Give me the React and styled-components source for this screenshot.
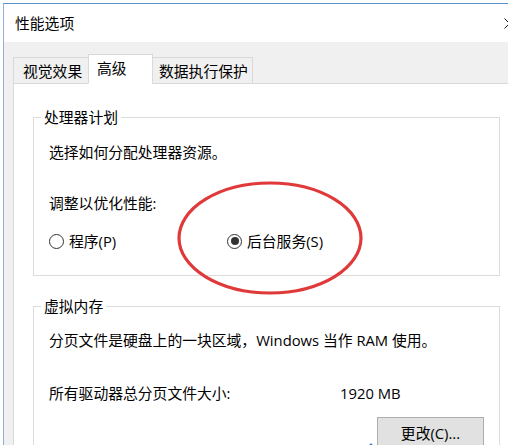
import React from "react";
import styled, { createGlobalStyle } from "styled-components";

const GlobalStyle = createGlobalStyle`
  html, body {
    margin: 0;
    padding: 0;
    background: #ffffff;
    width: 508px;
    height: 445px;
    overflow: hidden;
  }
  body {
    font-family: "Open Sans", "Noto Sans CJK SC", sans-serif;
    font-size: 14.8px;
    color: #000;
  }
  * { box-sizing: border-box; }
`;

const Page = styled.div`
  width: 508px;
  height: 445px;
  overflow: hidden;
  padding: 3px 0 0 3px;
`;

const Window = styled.div`
  position: relative;
  width: 529px;
  height: 442px;
  border-left: 1px solid #8fb2dc;
  border-top: 1px solid #5b8fcf;
  background: #f0f0f0;
  display: flex;
  flex-direction: column;
`;

const TitleBar = styled.div`
  height: 38px;
  background: #ffffff;
  display: flex;
  align-items: center;
  justify-content: space-between;
  padding-left: 11px;
`;

const Title = styled.span`
  line-height: 20px;
`;

const CloseButton = styled.div`
  width: 46px;
  height: 38px;
  display: flex;
  align-items: center;
  justify-content: center;
`;

const Body = styled.div`
  flex: 1;
  display: flex;
  flex-direction: column;
  padding: 12px 0 0 9px;
`;

const TabRow = styled.div`
  display: flex;
  align-items: flex-end;
  height: 30px;
  position: relative;
  z-index: 1;
`;

const Tab = styled.div`
  width: ${(p) => p.$width}px;
  height: ${(p) => (p.$active ? 30 : 27)}px;
  padding-left: ${(p) => p.$pad}px;
  margin-left: ${(p) => (p.$first ? 0 : -1)}px;
  background: ${(p) => (p.$active ? "#ffffff" : "#f0f0f0")};
  border: 1px solid #d9d9d9;
  border-bottom: ${(p) => (p.$active ? "1px solid #ffffff" : "1px solid #d9d9d9")};
  display: flex;
  align-items: center;
  padding-bottom: ${(p) => (p.$active ? 2 : 0)}px;
  line-height: 20px;
  white-space: nowrap;
`;

const Panel = styled.div`
  flex: 1;
  margin-top: -1px;
  background: #ffffff;
  border: 1px solid #d9d9d9;
  border-right: none;
  padding: 23px 0 0 19px;
`;

const Group = styled.fieldset`
  margin: ${(p) => p.$mt || 0}px 0 0 0;
  width: 467px;
  min-width: 0;
  border: 1px solid #dcdcdc;
  padding: ${(p) => p.$pt}px 15px ${(p) => p.$pb}px 15px;
`;

const Legend = styled.legend`
  padding: 0 3px;
  margin-left: -8px;
  line-height: 20px;
`;

const Line = styled.div`
  margin-top: ${(p) => p.$mt || 0}px;
  line-height: 20px;
  height: 20px;
  white-space: nowrap;
  display: ${(p) => (p.$grid ? "grid" : "block")};
  grid-template-columns: ${(p) => p.$cols || "none"};
  align-items: center;
`;

const RadioItem = styled.label`
  display: flex;
  align-items: center;
  gap: 5px;
`;

const RadioCircle = styled.span`
  width: 15px;
  height: 15px;
  border-radius: 50%;
  border: 1px solid #333333;
  background: #ffffff;
  display: flex;
  align-items: center;
  justify-content: center;
  &::after {
    content: "";
    width: 8px;
    height: 8px;
    border-radius: 50%;
    background: ${(p) => (p.$checked ? "#333333" : "transparent")};
  }
`;

const ButtonRow = styled.div`
  margin-top: 14px;
  display: flex;
  justify-content: flex-end;
  align-items: flex-end;
`;

const Button = styled.div`
  width: 107px;
  height: 32px;
  background: #e1e1e1;
  border: 1px solid #adadad;
  display: flex;
  align-items: center;
  justify-content: center;
  line-height: 20px;
`;

const Marker = styled.svg`
  position: absolute;
  left: 166px;
  top: 176px;
  pointer-events: none;
`;

const Shield = styled.svg`
  margin-right: 1px;
  margin-bottom: -6px;
`;

export default function App() {
  return (
    <Page>
      <GlobalStyle />
      <Window>
        <TitleBar>
          <Title>性能选项</Title>
          <CloseButton>
            <svg width="11" height="11" viewBox="0 0 11 11">
              <path d="M0.5 0.5 L10.5 10.5 M10.5 0.5 L0.5 10.5" stroke="#111" strokeWidth="1" fill="none" />
            </svg>
          </CloseButton>
        </TitleBar>
        <Body>
          <TabRow>
            <Tab $first $width={76} $pad={9}>视觉效果</Tab>
            <Tab $active $width={65} $pad={8}>高级</Tab>
            <Tab $width={101} $pad={6}>数据执行保护</Tab>
          </TabRow>
          <Panel>
            <Group $pt={15} $pb={24}>
              <Legend>处理器计划</Legend>
              <Line>选择如何分配处理器资源。</Line>
              <Line $mt={31}>调整以优化性能:</Line>
              <Line $mt={18} $grid $cols="178px auto">
                <RadioItem>
                  <RadioCircle />
                  程序(P)
                </RadioItem>
                <RadioItem>
                  <RadioCircle $checked />
                  后台服务(S)
                </RadioItem>
              </Line>
            </Group>
            <Group $mt={20} $pt={14} $pb={10}>
              <Legend>虚拟内存</Legend>
              <Line>分页文件是硬盘上的一块区域，Windows 当作 RAM 使用。</Line>
              <Line $mt={33} $grid $cols="291px auto">
                <span>所有驱动器总分页文件大小:</span>
                <span>1920 MB</span>
              </Line>
              <ButtonRow>
                <Shield width="10" height="12" viewBox="0 0 10 12">
                  <path d="M5 0 L10 6 L10 12 L0 12 L0 6 Z" fill="#2a7fd4" />
                </Shield>
                <Button>更改(C)...</Button>
              </ButtonRow>
            </Group>
          </Panel>
        </Body>
        <Marker width="200" height="124" viewBox="0 0 200 124">
          <ellipse cx="100" cy="58" rx="91" ry="55" fill="none" stroke="#e0393a" strokeWidth="3.2" />
        </Marker>
      </Window>
    </Page>
  );
}
